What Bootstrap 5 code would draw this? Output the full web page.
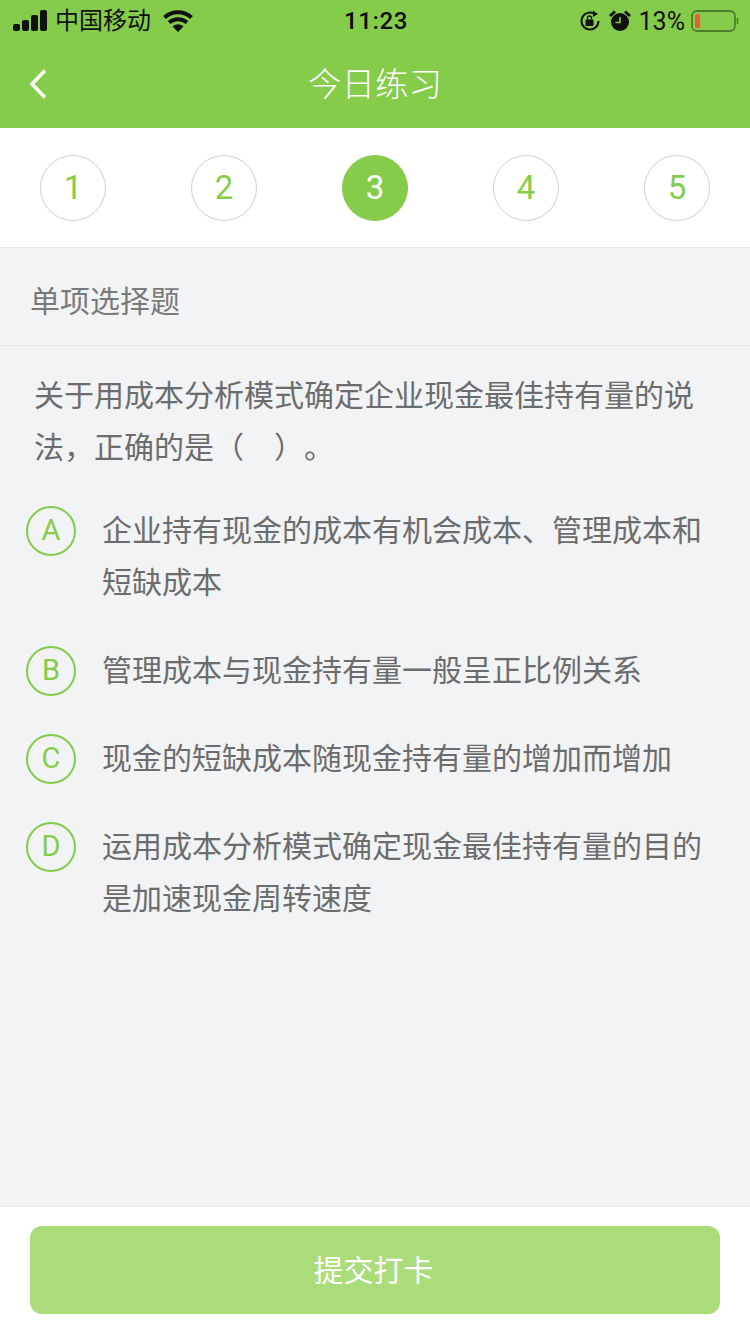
<!DOCTYPE html>
<html lang="zh"><head><meta charset="utf-8">
<meta name="viewport" content="width=device-width, initial-scale=1">
<link href="https://cdn.jsdelivr.net/npm/bootstrap@5.3.0/dist/css/bootstrap.min.css" rel="stylesheet">
<style>
html,body{height:1334px;overflow:hidden}
body{background:#f2f3f5;font-family:"Liberation Sans","Noto Sans CJK SC",sans-serif;color:#666;width:750px;text-spacing-trim:space-all}
.app-shell{height:1334px}
.head-zone{background:#86cc4b;height:128px}
.status-row{height:42px;padding:0 11px 0 13px;color:#111;font-size:24px}
.status-side{width:300px}
.status-time{font-family:Roboto,"Liberation Sans",sans-serif;font-size:24px;font-weight:500;letter-spacing:.6px;color:#0c0c0c}
.status-carrier{font-size:24px;line-height:1}
.status-pct{font-family:Roboto,"Liberation Sans",sans-serif;font-size:25px;font-weight:400;line-height:1;margin-right:6px}
.title-row{height:86px}
.title-text{color:#fff;font-size:33.500px;font-weight:300;line-height:1}
.back-link{left:28px;top:26px;line-height:0}
.step-row{background:#fff;height:120px;border-bottom:1px solid #e9e9ea;padding:0 40px}
.step-dot{width:66px;height:66px;border:1px solid #cfcfcf;border-radius:50%;color:#86cc4b;font-family:Roboto,"Liberation Sans",sans-serif;font-weight:400;font-size:33px}
.step-dot.is-on{background:#86cc4b;border-color:#86cc4b;color:#fff}
.type-row{height:98px;border-bottom:1px solid #e7e8ea;padding:10px 0 0 30px;font-size:30px;color:#7a7a7a}
.quiz-stem{padding:24px 30px 0 34px;font-size:30px;line-height:52px;color:#6c6c6c}
.opt-list{padding:32px 30px 0 26px}
.opt-item{gap:26px;margin-bottom:37px}
.opt-mark{width:50px;height:50px;border:2px solid #86cc4b;border-radius:50%;color:#86cc4b;font-family:Roboto,"Liberation Sans",sans-serif;font-weight:400;font-size:29px;flex:none}
.opt-text{font-size:30px;line-height:52px;color:#6c6c6c;margin-top:-1px}
.foot-zone{background:#fff;height:128px;border-top:1px solid #e9e9ee;padding:19px 30px 0}
.submit-btn{height:88px;width:100%;background:#aadc7a;border:0;border-radius:12px;color:#fff;font-size:30px;padding:0 3px 0 0}
.submit-btn:hover,.submit-btn:active{background:#aadc7a!important;color:#fff!important}
</style></head>
<body>
<div class="app-shell d-flex flex-column">
<header class="head-zone">
<div class="status-row d-flex align-items-center justify-content-between">
<div class="status-side d-flex align-items-center gap-2">
<svg width="34" height="22" viewBox="0 0 34 22"><rect x="0" y="14" width="7" height="7" rx="2" fill="#111"/><rect x="9" y="10" width="7" height="11" rx="2" fill="#111"/><rect x="18" y="5" width="7" height="16" rx="2" fill="#111"/><rect x="27" y="0" width="7" height="21" rx="2" fill="#111"/></svg>
<span class="status-carrier">中国移动</span>
<svg class="ms-1" width="30" height="22" viewBox="0 0 30 22"><path d="M1.500 7.500C9 .5 21 .5 28.500 7.500M6 12.500C11 8 19 8 24 12.500" fill="none" stroke="#111" stroke-width="4"/><path d="M9.500 16.500C13 13.500 17 13.500 20.500 16.500L15 22Z" fill="#111"/></svg>
</div>
<div class="status-time">11:23</div>
<div class="status-side d-flex align-items-center justify-content-end">
<svg width="22" height="22" viewBox="0 0 22 22" class="me-2"><path d="M19.500 11A8.500 8.500 0 1 1 15 3.500" fill="none" stroke="#111" stroke-width="2"/><path d="M14 0.500L19 4L14 7Z" fill="#111"/><rect x="6.500" y="9.500" width="8" height="6.500" rx="1" fill="#111"/><path d="M8.500 9.500V8a2 2 0 0 1 4 0v1.500" fill="none" stroke="#111" stroke-width="1.400"/></svg>
<svg width="22" height="22" viewBox="0 0 22 22" class="me-2"><circle cx="11" cy="12" r="9" fill="#111"/><path d="M11 7V12.500H6.500" fill="none" stroke="#86cc4b" stroke-width="1.600"/><path d="M1 6L6 1.500M21 6L16 1.500" stroke="#111" stroke-width="3"/></svg>
<span class="status-pct">13%</span>
<svg width="48" height="24" viewBox="0 0 48 24"><rect x="1" y="2" width="43" height="20" rx="5" fill="none" stroke="#4f7f2a" stroke-width="1.800"/><rect x="4" y="5" width="5" height="14" rx="1.500" fill="#ee5a36"/><path d="M46.500 9v6" stroke="#4f7f2a" stroke-width="1.600"/></svg>
</div>
</div>
<div class="title-row position-relative d-flex align-items-center justify-content-center">
<a class="back-link position-absolute" href="#" aria-label="返回"><svg width="22" height="32" viewBox="0 0 22 32"><path d="M17 2.500L4 16L17 29.500" fill="none" stroke="#fff" stroke-width="3.600"/></svg></a>
<div class="title-text">今日练习</div>
</div>
</header>
<nav class="step-row d-flex align-items-center justify-content-between">
<div class="step-dot d-flex align-items-center justify-content-center">1</div>
<div class="step-dot d-flex align-items-center justify-content-center">2</div>
<div class="step-dot is-on d-flex align-items-center justify-content-center">3</div>
<div class="step-dot d-flex align-items-center justify-content-center">4</div>
<div class="step-dot d-flex align-items-center justify-content-center">5</div>
</nav>
<main class="flex-grow-1">
<div class="type-row d-flex align-items-center">单项选择题</div>
<div class="quiz-stem">关于用成本分析模式确定企业现金最佳持有量的说法，正确的是（　）。</div>
<div class="opt-list">
<div class="opt-item d-flex"><div class="opt-mark d-flex align-items-center justify-content-center">A</div><div class="opt-text">企业持有现金的成本有机会成本、管理成本和短缺成本</div></div>
<div class="opt-item d-flex"><div class="opt-mark d-flex align-items-center justify-content-center">B</div><div class="opt-text">管理成本与现金持有量一般呈正比例关系</div></div>
<div class="opt-item d-flex"><div class="opt-mark d-flex align-items-center justify-content-center">C</div><div class="opt-text">现金的短缺成本随现金持有量的增加而增加</div></div>
<div class="opt-item d-flex"><div class="opt-mark d-flex align-items-center justify-content-center">D</div><div class="opt-text">运用成本分析模式确定现金最佳持有量的目的是加速现金周转速度</div></div>
</div>
</main>
<footer class="foot-zone"><button class="btn submit-btn" type="button">提交打卡</button></footer>
</div>
<script src="https://cdn.jsdelivr.net/npm/bootstrap@5.3.0/dist/js/bootstrap.bundle.min.js"></script>
</body></html>
